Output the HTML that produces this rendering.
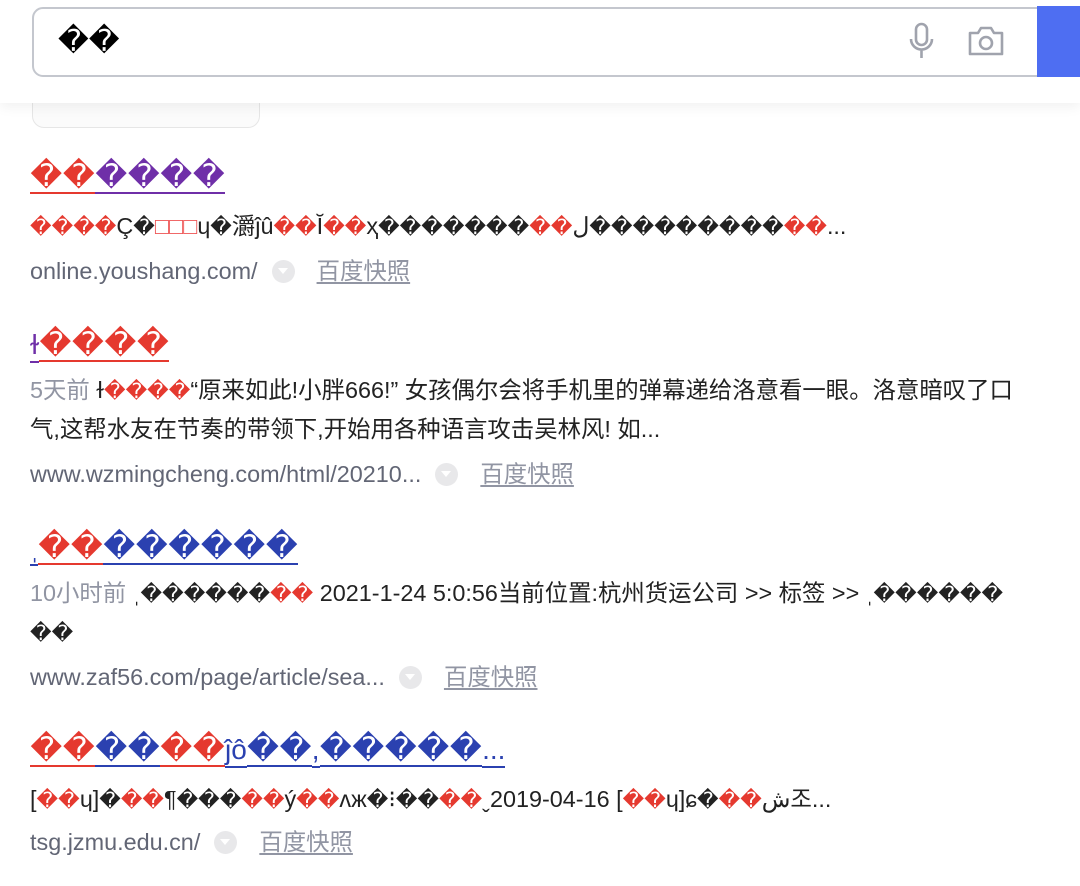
<!DOCTYPE html><html><head><meta charset="utf-8"><style>
body{margin:0;width:1080px;height:886px;background:#fff;position:relative;overflow:hidden;font-family:"Liberation Sans","Noto Sans CJK SC",sans-serif;}
.a{position:absolute;white-space:nowrap;}
.d{display:inline-block;font-family:"DejaVu Sans",sans-serif;text-align:center;overflow:visible}
.t .d{width:32.5px;font-size:31px}
.b .d{width:21.6px;font-size:21px}
.r{color:#e5392f}.p{color:#6f2fa8}.u{color:#2b41b0}.k{color:#222}
.t{font-size:28px;line-height:34px}
.t>span{display:inline-block;border-bottom:2px solid currentColor;line-height:32px}
.b{font-size:23.4px;line-height:30px;color:#222}
.g{color:#9195a3}
.url{font-size:23.4px;color:#626675;line-height:30px}
.url .c{display:inline-block;width:23px;height:23px;border-radius:50%;background:#e8e8ea;vertical-align:middle;margin:-3px 22px 0 14px;position:relative}
.url .c:after{content:"";position:absolute;left:6px;top:8px;border:5.5px solid transparent;border-top:6px solid #fff}
.url .s{color:#9195a3;text-decoration:underline;text-underline-offset:3px}
</style></head><body>
<div class="a" style="left:0;top:0;width:1080px;height:103px;background:#fff;box-shadow:0 4px 12px rgba(0,0,0,.06);z-index:2"></div>
<div class="a" style="left:32px;top:92px;width:226px;height:34px;border:1px solid #e6e6e6;border-radius:0 0 12px 12px;background:#fbfbfb"></div>
<div class="a" style="left:32px;top:7px;width:1010px;height:66px;border:2px solid #c4c7ce;border-radius:11px 0 0 11px;z-index:3;background:#fff"></div>
<div class="a" style="left:1037px;top:6px;width:43px;height:71px;background:#4e6ef2;z-index:4"></div>
<div class="a" style="left:58px;top:24px;z-index:4;font-family:'DejaVu Sans';font-size:30px;color:#000">��</div>
<svg class="a" style="left:906px;top:22px;z-index:4" width="32" height="38" viewBox="0 0 32 38" fill="none" stroke="#a0a3ad" stroke-width="2.6"><rect x="10" y="2" width="11" height="21" rx="5.5"/><path d="M5 17a10.5 10.5 0 0 0 21 0M15.5 28v8"/></svg>
<svg class="a" style="left:966px;top:24px;z-index:4" width="40" height="34" viewBox="0 0 40 34" fill="none" stroke="#a0a3ad" stroke-width="2.6"><path d="M4 9h8l3-5h10l3 5h8v21H4z" stroke-linejoin="round"/><circle cx="20" cy="19" r="6"/></svg>

<div class="a t" style="left:30px;top:160px;"><span class="d r">�</span><span class="d r">�</span><span class="d p">�</span><span class="d p">�</span><span class="d p">�</span><span class="d p">�</span></div>
<div class="a b" style="left:30px;top:211px;"><span class="d r">�</span><span class="d r">�</span><span class="d r">�</span><span class="d r">�</span>Ç<span class="d k">�</span><span style="color:#e55">□□□</span>ɥ<span class="d k">�</span>灂ĵû<span class="d r">�</span><span class="d r">�</span>Ĭ<span class="d r">�</span><span class="d r">�</span>ҳ<span class="d k">�</span><span class="d k">�</span><span class="d k">�</span><span class="d k">�</span><span class="d k">�</span><span class="d k">�</span><span class="d k">�</span><span class="d r">�</span><span class="d r">�</span>ل<span class="d k">�</span><span class="d k">�</span><span class="d k">�</span><span class="d k">�</span><span class="d k">�</span><span class="d k">�</span><span class="d k">�</span><span class="d k">�</span><span class="d k">�</span><span class="d r">�</span><span class="d r">�</span>...</div>
<div class="a url" style="left:30px;top:256px;">online.youshang.com/<span class="c"></span><span class="s">百度快照</span></div>

<div class="a t" style="left:30px;top:328px;"><span class="p">ɫ</span><span class="d r">�</span><span class="d r">�</span><span class="d r">�</span><span class="d r">�</span></div>
<div class="a b" style="left:30px;top:375px;"><span class="g">5天前</span> ɫ<span class="d r">�</span><span class="d r">�</span><span class="d r">�</span><span class="d r">�</span>“原来如此!小胖666!” 女孩偶尔会将手机里的弹幕递给洛意看一眼。洛意暗叹了口</div>
<div class="a b" style="left:30px;top:414px;">气,这帮水友在节奏的带领下,开始用各种语言攻击吴林风! 如...</div>
<div class="a url" style="left:30px;top:459px;">www.wzmingcheng.com/html/20210...<span class="c"></span><span class="s">百度快照</span></div>

<div class="a t" style="left:30px;top:531px;"><span class="u" style="width:8px">ˌ</span><span class="d r">�</span><span class="d r">�</span><span class="d u">�</span><span class="d u">�</span><span class="d u">�</span><span class="d u">�</span><span class="d u">�</span><span class="d u">�</span></div>
<div class="a b" style="left:30px;top:578px;"><span class="g">10小时前</span> ˌ<span class="d k">�</span><span class="d k">�</span><span class="d k">�</span><span class="d k">�</span><span class="d k">�</span><span class="d k">�</span><span class="d r">�</span><span class="d r">�</span> 2021-1-24 5:0:56当前位置:杭州货运公司 &gt;&gt; 标签 &gt;&gt; ˌ<span class="d k">�</span><span class="d k">�</span><span class="d k">�</span><span class="d k">�</span><span class="d k">�</span><span class="d k">�</span></div>
<div class="a b" style="left:30px;top:617px;"><span class="d k">�</span><span class="d k">�</span></div>
<div class="a url" style="left:30px;top:662px;">www.zaf56.com/page/article/sea...<span class="c"></span><span class="s">百度快照</span></div>

<div class="a t" style="left:30px;top:733px;"><span class="d r">�</span><span class="d r">�</span><span class="d u">�</span><span class="d u">�</span><span class="d r">�</span><span class="d r">�</span><span class="u">ĵô</span><span class="d u">�</span><span class="d u">�</span><span class="u">,</span><span class="d u">�</span><span class="d u">�</span><span class="d u">�</span><span class="d u">�</span><span class="d u">�</span><span class="u">...</span></div>
<div class="a b" style="left:30px;top:784px;">[<span class="d r">�</span><span class="d r">�</span>ɥ]<span class="d k">�</span><span class="d r">�</span><span class="d r">�</span>¶<span class="d k">�</span><span class="d k">�</span><span class="d k">�</span><span class="d r">�</span><span class="d r">�</span>ý<span class="d r">�</span><span class="d r">�</span>ʌж<span class="d k">�</span>⁝<span class="d k">�</span><span class="d k">�</span><span class="d r">�</span><span class="d r">�</span>ˬ2019-04-16 [<span class="d r">�</span><span class="d r">�</span>ɥ]ɕ<span class="d k">�</span><span class="d r">�</span><span class="d r">�</span>ش조...</div>
<div class="a url" style="left:30px;top:827px;">tsg.jzmu.edu.cn/<span class="c"></span><span class="s">百度快照</span></div>
</body></html>
